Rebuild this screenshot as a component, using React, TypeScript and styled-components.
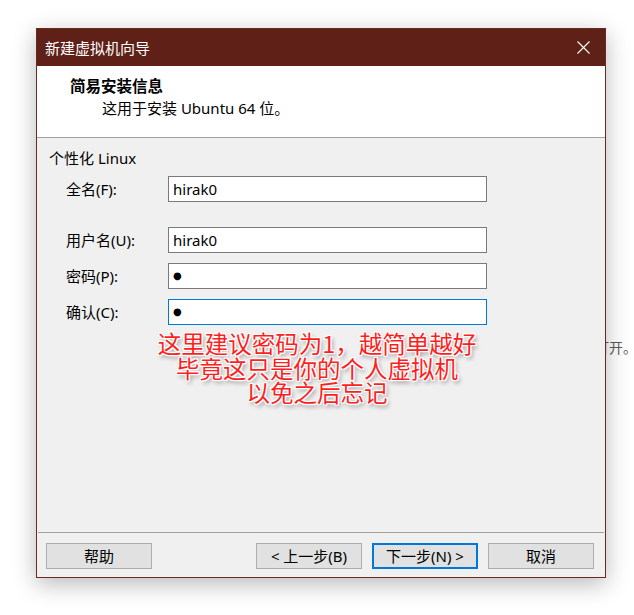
import styled, { createGlobalStyle } from "styled-components";

const GlobalStyle = createGlobalStyle`
  html, body {
    margin: 0;
    background: #ffffff;
  }
  body {
    font-family: "Noto Sans", "Noto Sans CJK SC", sans-serif;
    font-size: 15px;
    color: #000;
  }
`;

const Page = styled.div`
  position: relative;
  width: 634px;
  height: 615px;
  box-sizing: border-box;
  padding: 28px 0 0 36px;
  overflow: hidden;
`;

const BehindText = styled.span`
  position: absolute;
  left: 595px;
  top: 337px;
  white-space: nowrap;
  font-size: 14px;
  line-height: 20px;
  color: #5c5c5c;
  font-family: "Noto Sans CJK SC", sans-serif;
  z-index: 0;
`;

const Dialog = styled.div`
  position: relative;
  z-index: 1;
  width: 570px;
  height: 550px;
  box-sizing: border-box;
  border: 1px solid #6a2a20;
  display: flex;
  flex-direction: column;
  background: #f0f0f0;
  box-shadow: 0 6px 22px rgba(0, 0, 0, 0.28);
`;

const TitleBar = styled.div`
  height: 37px;
  flex: none;
  background: #5f2017;
  display: flex;
  align-items: center;
  justify-content: space-between;
  padding: 0 15px 0 8px;
  color: #ffffff;
  font-family: "Noto Sans CJK SC", sans-serif;
  font-size: 15px;
`;

const Header = styled.div`
  height: 72px;
  flex: none;
  background: #ffffff;
  box-sizing: border-box;
  padding: 9px 0 0 33px;
  border-bottom: 1px solid #a0a0a0;
`;

const HeadTitle = styled.div`
  font-weight: bold;
  font-family: "Noto Sans CJK SC", sans-serif;
  font-size: 15.5px;
  line-height: 20px;
`;

const HeadSub = styled.div`
  line-height: 20px;
  margin: 3px 0 0 32px;
`;

const Body = styled.div`
  flex: 1;
  padding: 10px 0 0 12px;
`;

const GroupLabel = styled.div`
  line-height: 20px;
`;

const Form = styled.div`
  margin: 8px 0 0 17px;
  display: grid;
  grid-template-columns: 102px 319px;
  row-gap: 10px;
`;

const Label = styled.label<{ $gap?: boolean }>`
  height: 26px;
  line-height: 26px;
  margin-top: ${(p) => (p.$gap ? "15px" : "0")};
`;

const Field = styled.div<{ $focus?: boolean; $gap?: boolean; $dot?: boolean }>`
  height: 26px;
  box-sizing: border-box;
  background: #ffffff;
  border: 1px solid ${(p) => (p.$focus ? "#0078d7" : "#7a7a7a")};
  margin-top: ${(p) => (p.$gap ? "15px" : "0")};
  padding-left: 4px;
  line-height: 24px;
  font-size: ${(p) => (p.$dot ? "10px" : "15px")};
  font-family: ${(p) => (p.$dot ? '"DejaVu Sans", sans-serif' : "inherit")};
`;

const Footer = styled.div`
  flex: none;
  height: 45px;
  box-sizing: border-box;
  margin: 0 1px;
  border-top: 1px solid #a0a0a0;
  padding: 10px 10px 0 8px;
  display: flex;
  align-items: flex-start;
  justify-content: space-between;
`;

const ButtonGroup = styled.div`
  display: flex;
  gap: 10px;
`;

const Button = styled.button<{ $primary?: boolean }>`
  width: 106px;
  height: 26px;
  box-sizing: border-box;
  background: #e1e1e1;
  border: ${(p) => (p.$primary ? "2px solid #0078d7" : "1px solid #adadad")};
  font-family: "Noto Sans", "Noto Sans CJK SC", sans-serif;
  font-size: 15px;
  color: #000;
  padding: 0;
  line-height: 20px;
`;

const Note = styled.div`
  position: absolute;
  z-index: 2;
  left: 142px;
  top: 331px;
  width: 350px;
  text-align: center;
  font-family: "Noto Sans CJK SC", sans-serif;
  font-size: 23.5px;
  line-height: 24.5px;
  color: #ff1e1e;
  text-shadow: 0 0 2px #fff, 0 0 2px #fff, 0 0 3px #fff, 1px 1px 0 #fff,
    -1px -1px 0 #fff, 1px -1px 0 #fff, -1px 1px 0 #fff, 2px 3px 4px rgba(0, 0, 0, 0.45);
`;

const CloseIcon = () => (
  <svg width="13" height="13" viewBox="0 0 13 13">
    <path d="M0.5 0.5 L12.5 12.5 M12.5 0.5 L0.5 12.5" stroke="#ffffff" strokeWidth="1.1" />
  </svg>
);

export default function App() {
  return (
    <>
      <GlobalStyle />
      <Page>
        <BehindText>打开。</BehindText>
        <Dialog>
          <TitleBar>
            <span>新建虚拟机向导</span>
            <CloseIcon />
          </TitleBar>
          <Header>
            <HeadTitle>简易安装信息</HeadTitle>
            <HeadSub>这用于安装 Ubuntu 64 位。</HeadSub>
          </Header>
          <Body>
            <GroupLabel>个性化 Linux</GroupLabel>
            <Form>
              <Label>全名(F):</Label>
              <Field>hirak0</Field>
              <Label $gap>用户名(U):</Label>
              <Field $gap>hirak0</Field>
              <Label>密码(P):</Label>
              <Field $dot>●</Field>
              <Label>确认(C):</Label>
              <Field $dot $focus>●</Field>
            </Form>
          </Body>
          <Footer>
            <Button>帮助</Button>
            <ButtonGroup>
              <Button>&lt; 上一步(B)</Button>
              <Button $primary>下一步(N) &gt;</Button>
              <Button>取消</Button>
            </ButtonGroup>
          </Footer>
        </Dialog>
        <Note>
          这里建议密码为1，越简单越好
          <br />
          毕竟这只是你的个人虚拟机
          <br />
          以免之后忘记
        </Note>
      </Page>
    </>
  );
}
